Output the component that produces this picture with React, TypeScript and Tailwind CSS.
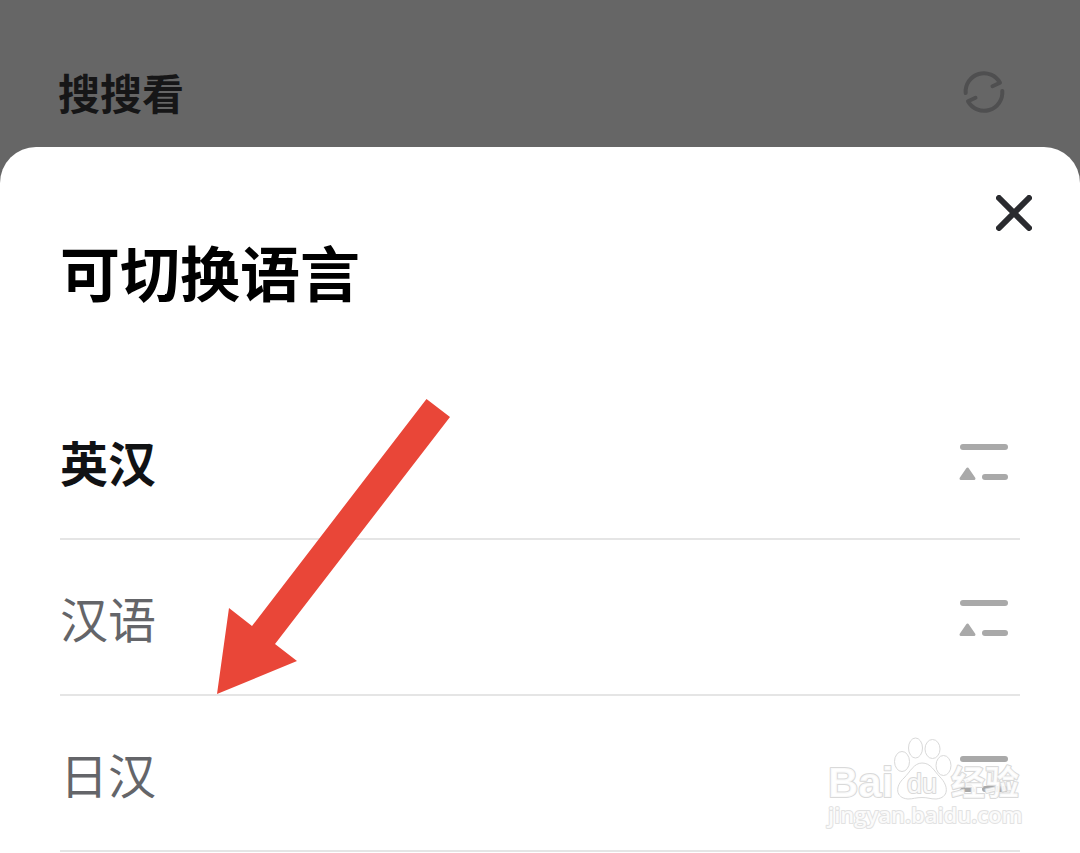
import { useState } from "react";

const initialLanguages = [
  { id: "en-zh", name: "英汉" },
  { id: "zh", name: "汉语" },
  { id: "ja-zh", name: "日汉" },
];

function RefreshIcon() {
  return (
    <svg width="44" height="44" viewBox="0 0 44 44" fill="none" stroke="#4f4f50" strokeWidth="4" strokeLinecap="round" strokeLinejoin="round">
      <path d="M3.700 23A18.300 18.300 0 0 1 38 12.800L30.500 16.200" />
      <path d="M40.300 21A18.300 18.300 0 0 1 6 31.200L13.500 27.800" />
    </svg>
  );
}

function CloseIcon() {
  return (
    <svg width="36" height="36" viewBox="0 0 36 36" fill="none" stroke="#2a2b2f" strokeWidth="6" strokeLinecap="round">
      <path d="M3 3L33 33M33 3L3 33" />
    </svg>
  );
}

function SortIcon() {
  return (
    <svg width="50" height="38" viewBox="0 0 50 38" fill="#a9a9a9">
      <rect x="1" y="1" width="48" height="6" rx="3" />
      <rect x="23" y="31" width="26" height="6" rx="3" />
      <path d="M8.500 26L15 35.500H2Z" stroke="#a9a9a9" strokeWidth="3" strokeLinejoin="round" />
    </svg>
  );
}

function Watermark() {
  return (
    <svg className="absolute top-10 -right-1 pointer-events-none" width="200" height="96" viewBox="0 0 200 96" fill="#ffffff" fillOpacity="0.85" stroke="#d9d9d9" strokeWidth="1" strokeLinejoin="round">
      <ellipse cx="78" cy="25.500" rx="7.500" ry="10" />
      <ellipse cx="91.500" cy="12" rx="7" ry="10" />
      <ellipse cx="108.500" cy="13" rx="7.500" ry="9.500" />
      <ellipse cx="119.500" cy="29.500" rx="7.500" ry="10" />
      <path d="M98 27C107 27 110 35 116 41C125 50 125 62 112 63C106 63 104 61.500 98 61.500C92 61.500 89 63 84 63C71 62 71 50 80 42C86 36 90 27 98 27Z" />
      <g paintOrder="stroke" strokeWidth="2">
        <text x="4" y="61" fontSize="42" fontWeight="700" fontFamily="Liberation Sans, sans-serif">Bai</text>
        <text x="83" y="57" fontSize="27" fontWeight="400" fontFamily="Liberation Sans, sans-serif">du</text>
        <text x="127" y="59" fontSize="34" fontWeight="700" fontFamily="Noto Sans CJK SC, sans-serif">经验</text>
        <text x="4" y="87" fontSize="22" fontWeight="600" stroke="#e2e2e2" fontFamily="Open Sans, sans-serif">jingyan.baidu.com</text>
      </g>
    </svg>
  );
}

export default function App() {
  const [selected, setSelected] = useState("en-zh");
  const [open, setOpen] = useState(true);

  return (
    <div className="flex min-h-screen flex-col bg-[#666666] font-['Noto_Sans_CJK_SC','Liberation_Sans',sans-serif]">
      <header className="flex items-center justify-between pt-[62px] pb-[25px] pl-[58px] pr-[74px]">
        <h2 className="text-[42px] leading-[60px] font-bold text-[#161617]">搜搜看</h2>
        <button type="button" aria-label="刷新">
          <RefreshIcon />
        </button>
      </header>

      {open && (
        <section className="relative grow bg-white rounded-t-[36px] pt-12">
          <div className="flex justify-end pr-12">
            <button type="button" aria-label="关闭" onClick={() => setOpen(false)}>
              <CloseIcon />
            </button>
          </div>

          <h1 className="mt-2.5 px-[60px] text-[60px] leading-[60px] font-bold text-black">可切换语言</h1>

          <ul className="mt-[83px] px-[60px]">
            {initialLanguages.map((lang) => (
              <li key={lang.id} className="relative flex items-center justify-between h-[156px] pt-0.5 border-b-2 border-[#e5e5e5]">
                <button
                  type="button"
                  onClick={() => setSelected(lang.id)}
                  className={
                    selected === lang.id
                      ? "pb-0.5 text-5xl font-bold text-[#111214]"
                      : "pb-0.5 text-5xl text-[#646569]"
                  }
                >
                  {lang.name}
                </button>
                <button type="button" aria-label="排序" className="mr-[11px]">
                  <SortIcon />
                </button>
                {lang.id === "ja-zh" && <Watermark />}
              </li>
            ))}
          </ul>

          {/* hint arrow over the list */}
          <svg className="absolute top-[252px] left-[217px] pointer-events-none" width="234" height="296" viewBox="0 0 234 296" fill="#e94638">
            <path d="M209.500 0L233 18L58 245L80 262L0 295L12 209L35 227Z" />
          </svg>
        </section>
      )}
    </div>
  );
}
